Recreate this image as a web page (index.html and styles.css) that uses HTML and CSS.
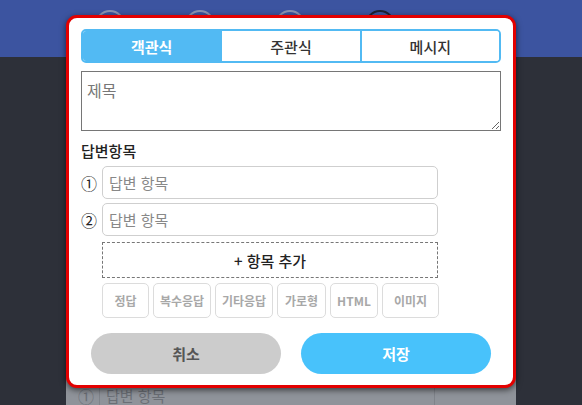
FILE: index.html
```html
<!DOCTYPE html>
<html lang="ko">
<head>
    <meta charset="UTF-8">
    <meta name="viewport" content="width=device-width, initial-scale=1.0">
    <title>설문 항목 편집</title>
    <link rel="stylesheet" href="styles.css">
</head>
<body>
    <div class="header">
        <span class="step"></span>
        <span class="step"></span>
        <span class="step"></span>
        <span class="step current"></span>
    </div>

    <div class="page">
        <div class="item-row dim">
            <span class="num">①</span>
            <div class="item-input">답변 항목</div>
        </div>
    </div>

    <div class="modal">
        <div class="tabs">
            <button class="tab active">객관식</button>
            <button class="tab">주관식</button>
            <button class="tab">메시지</button>
        </div>

        <textarea class="title-input" placeholder="제목"></textarea>

        <h3 class="label">답변항목</h3>

        <div class="item-row">
            <span class="num">①</span>
            <input type="text" class="item-input" placeholder="답변 항목">
        </div>
        <div class="item-row">
            <span class="num">②</span>
            <input type="text" class="item-input" placeholder="답변 항목">
        </div>

        <button class="add-item">+ 항목 추가</button>

        <div class="options">
            <button class="opt">정답</button>
            <button class="opt">복수응답</button>
            <button class="opt">기타응답</button>
            <button class="opt">가로형</button>
            <button class="opt">HTML</button>
            <button class="opt">이미지</button>
        </div>

        <div class="actions">
            <button class="btn cancel">취소</button>
            <button class="btn save">저장</button>
        </div>
    </div>
</body>
</html>
```

FILE: styles.css
```css
* {
    box-sizing: border-box;
}
body {
    margin: 0;
    height: 405px;
    overflow: hidden;
    background-color: #2d3039;
    font-family: "Noto Sans CJK KR", "Noto Sans", sans-serif;
}
button, input, textarea {
    font-family: inherit;
}
.header {
    height: 57px;
    background-color: #3c54a0;
    display: flex;
    gap: 60px;
    padding: 10px 0 0 95px;
}
.step {
    width: 30px;
    height: 30px;
    border-radius: 50%;
    border: 2px solid #8c94b2;
}
.step.current {
    border-color: #1c2030;
}
.page {
    width: 450px;
    height: 348px;
    margin-left: 66px;
    background-color: #8f939a;
    padding: 0 12px;
    display: flex;
    flex-direction: column;
    justify-content: flex-end;
}
.page .item-row {
    margin-bottom: -7px;
}
.item-row.dim .item-input {
    border-color: #7f838a;
    color: #6b6f76;
    background: transparent;
    display: flex;
    align-items: center;
}
.item-row.dim .num {
    color: #6b6f76;
}

/* modal */
.modal {
    position: absolute;
    left: 66px;
    top: 15px;
    width: 450px;
    background-color: white;
    border: 3px solid #e30000;
    border-radius: 11px;
    padding: 11px 12px 11px;
    box-shadow: 0 2px 6px rgba(0,0,0,0.6);
}
.tabs {
    display: flex;
    height: 34px;
    border: 2px solid #52baf3;
    border-radius: 5px;
    overflow: hidden;
}
.tab {
    flex: 1;
    border: none;
    border-left: 2px solid #52baf3;
    background-color: white;
    color: #333;
    font-size: 15px;
    font-weight: 500;
    padding: 0;
}
.tab:first-child {
    border-left: none;
}
.tab.active {
    background-color: #52baf3;
    color: white;
    font-weight: 700;
}
.title-input {
    display: block;
    width: 100%;
    height: 60px;
    margin-top: 8px;
    border: 1px solid #767676;
    padding: 6px 5px;
    font-size: 16px;
    resize: vertical;
}
.title-input::placeholder {
    color: #777;
}
.label {
    margin: 10px 0 0;
    font-size: 15px;
    font-weight: 500;
    line-height: 20px;
    color: #222;
}
.item-row {
    display: flex;
    align-items: center;
    margin-top: 4px;
}
.label + .item-row {
    margin-top: 5px;
}
.num {
    width: 21px;
    font-size: 16px;
    color: #222;
}
.item-input {
    width: 336px;
    height: 33px;
    border: 1px solid #cfcfcf;
    border-radius: 5px;
    padding: 0 6px;
    font-size: 15px;
}
.item-input::placeholder {
    color: #888;
}
.add-item {
    display: block;
    width: 336px;
    height: 36px;
    margin: 6px 0 0 21px;
    border: 1px dashed #777;
    background-color: white;
    font-size: 15px;
    font-weight: 500;
    color: #222;
}
.options {
    display: flex;
    gap: 4px;
    width: 337px;
    margin: 5px 0 0 21px;
}
.opt {
    width: 47px;
    height: 35px;
    padding: 0;
    border: 1px solid #dcdcdc;
    border-radius: 5px;
    background-color: white;
    color: #a8a8a8;
    font-size: 12px;
    font-weight: 700;
}
.opt:nth-child(2),
.opt:nth-child(3) {
    width: 58px;
}
.opt:nth-child(4) {
    width: 49px;
}
.opt:nth-child(5) {
    width: 48px;
}
.opt:last-child {
    flex: 1;
}
.actions {
    display: flex;
    justify-content: center;
    gap: 20px;
    margin-top: 15px;
}
.btn {
    width: 190px;
    height: 41px;
    border: none;
    border-radius: 21px;
    font-size: 15px;
    font-weight: 700;
}
.cancel {
    background-color: #cccccc;
    color: #555;
}
.save {
    background-color: #48c2fb;
    color: white;
}
```
